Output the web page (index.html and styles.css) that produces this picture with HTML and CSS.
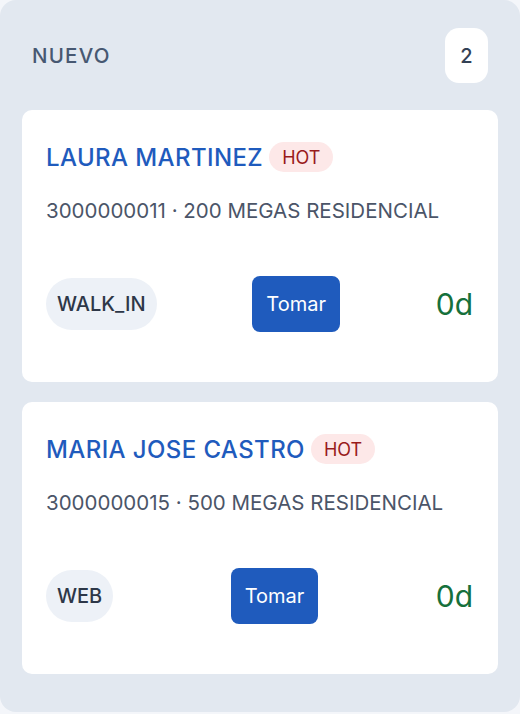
FILE: index.html
```html
<!DOCTYPE html>
<html lang="es">
<head>
<meta charset="utf-8">
<link rel="stylesheet" href="styles.css">
</head>
<body>
<section class="column">
  <header class="column-head">
    <h2 class="column-title">NUEVO</h2>
    <span class="count">2</span>
  </header>
  <div class="cards">
    <article class="card">
      <div class="card-name">
        <span class="name">LAURA MARTINEZ</span>
        <span class="tag-hot">HOT</span>
      </div>
      <p class="card-meta">3000000011 · 200 MEGAS RESIDENCIAL</p>
      <div class="card-foot">
        <span class="source">WALK_IN</span>
        <button class="take">Tomar</button>
        <span class="age">0d</span>
      </div>
    </article>
    <article class="card">
      <div class="card-name">
        <span class="name">MARIA JOSE CASTRO</span>
        <span class="tag-hot">HOT</span>
      </div>
      <p class="card-meta">3000000015 · 500 MEGAS RESIDENCIAL</p>
      <div class="card-foot">
        <span class="source">WEB</span>
        <button class="take">Tomar</button>
        <span class="age">0d</span>
      </div>
    </article>
  </div>
</section>
</body>
</html>
```
FILE: styles.css
```css
* { box-sizing: border-box; }
html, body { margin: 0; padding: 0; }
body {
  background: #f4f6fa;
  font-family: Inter, "Noto Sans", sans-serif;
  height: 714px;
  overflow: hidden;
}
.column {
  background: #e2e8f0;
  border-radius: 16px;
  height: 712px;
  padding: 28px 22px 38px;
}
.column-head {
  display: flex;
  align-items: center;
  justify-content: space-between;
  padding: 0 10px 0 10px;
  height: 55px;
}
.column-title {
  margin: 0;
  font-size: 20.5px;
  font-weight: 500;
  color: #475872;
  letter-spacing: 1.2px;
}
.count {
  background: #fff;
  border-radius: 14px;
  width: 43px;
  height: 55px;
  display: flex;
  align-items: center;
  justify-content: center;
  font-size: 20px;
  font-weight: 500;
  color: #334155;
}
.cards {
  margin-top: 27px;
  display: flex;
  flex-direction: column;
  gap: 20px;
}
.card {
  background: #fff;
  border-radius: 10px;
  height: 272px;
  padding: 32px 24px 0;
}
.card-name {
  display: flex;
  align-items: center;
  gap: 6px;
  height: 30px;
}
.name {
  font-size: 24px;
  font-weight: 500;
  color: #1f5bbd;
  letter-spacing: 0.4px;
}
.tag-hot {
  background: #fde8e8;
  color: #991b1b;
  font-size: 18px;
  font-weight: 400;
  border-radius: 15px;
  height: 30px;
  padding: 0 13px;
  display: flex;
  align-items: center;
}
.card-meta {
  margin: 26px 0 0;
  font-size: 20.5px;
  line-height: 26px;
  color: #4b5568;
  font-weight: 400;
}
.card-foot {
  margin-top: 52px;
  display: flex;
  align-items: center;
  justify-content: space-between;
  height: 56px;
}
.source {
  background: #edf1f7;
  color: #2d3748;
  font-size: 20px;
  font-weight: 500;
  border-radius: 26px;
  height: 52px;
  padding: 0 11px;
  display: flex;
  align-items: center;
}
.take {
  background: #1f5bbd;
  color: #fff;
  border: 0;
  border-radius: 8px;
  height: 56px;
  padding: 0 14px;
  font-family: inherit;
  font-size: 20px;
  font-weight: 400;
}
.age {
  font-size: 30px;
  color: #16703b;
  font-weight: 400;
  margin-right: 1px;
}
```
